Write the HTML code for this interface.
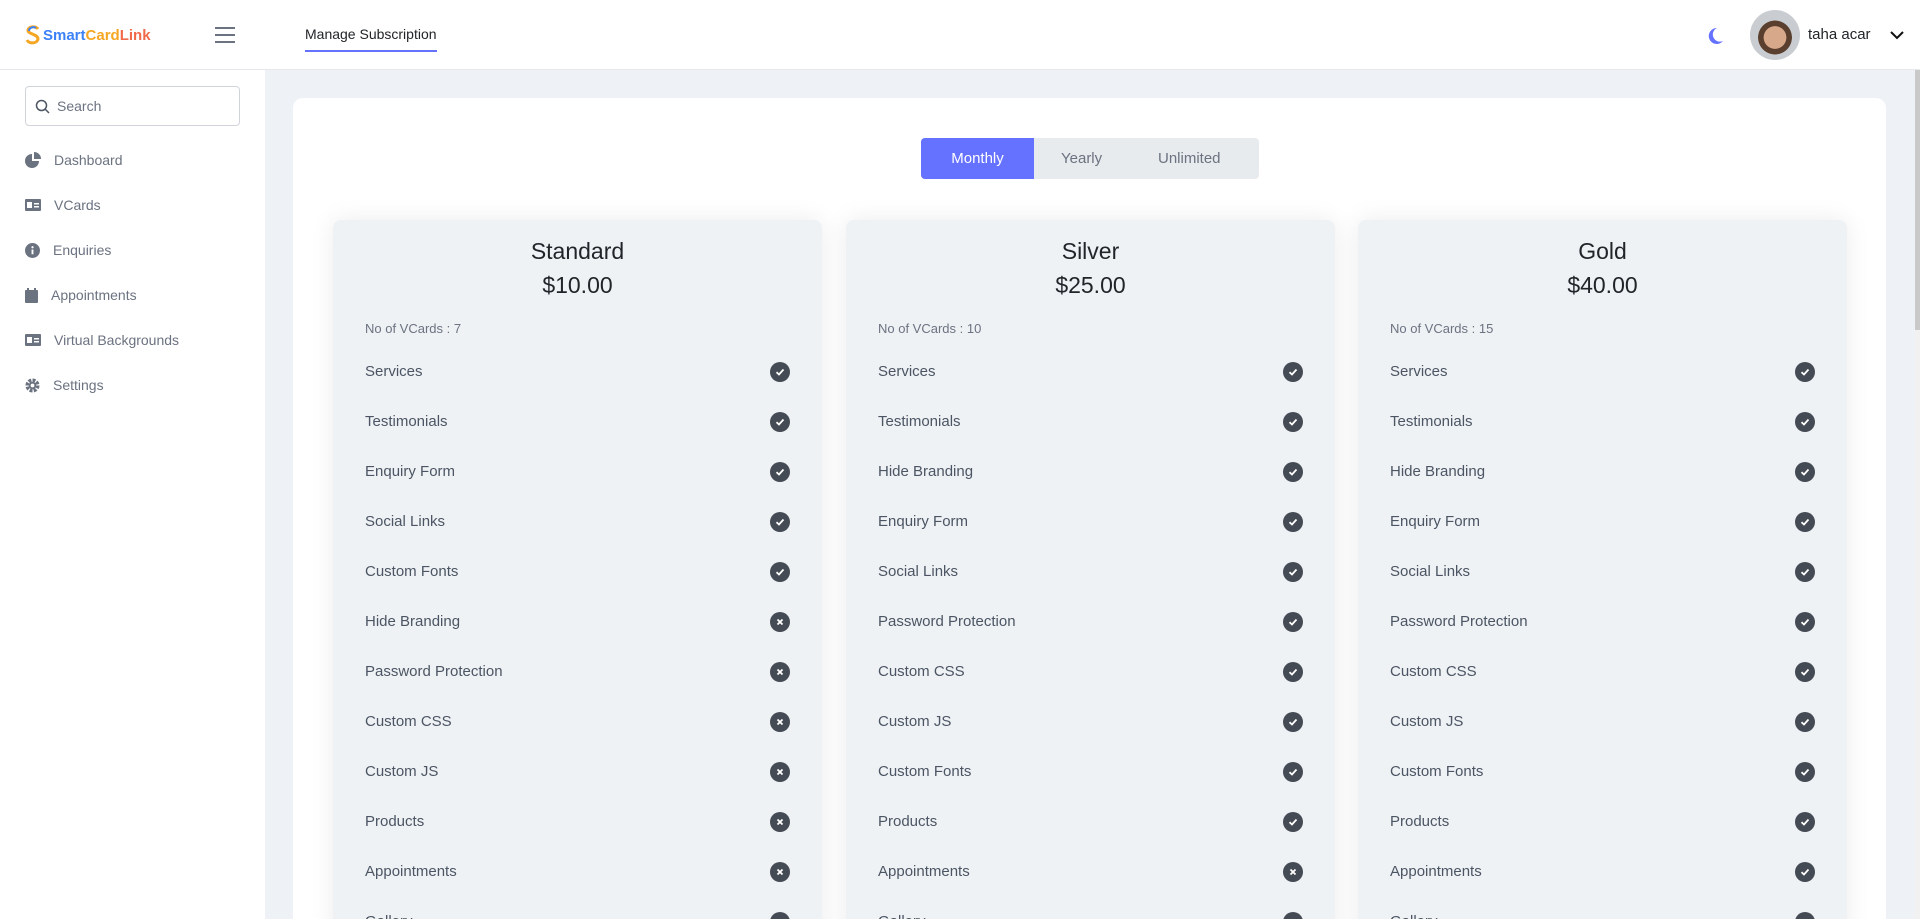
<!DOCTYPE html>
<html><head><meta charset="utf-8"><style>
*{box-sizing:border-box;margin:0;padding:0}
html,body{width:1920px;height:919px;overflow:hidden}
body{background:#eef1f5;font-family:"Liberation Sans",sans-serif}
#root{position:relative;width:1920px;height:919px;overflow:hidden;background:#eef1f5}
.hdr{position:absolute;left:0;top:0;width:1920px;height:70px;background:#fff;border-bottom:1px solid #e6e8ec}
.side{position:absolute;left:0;top:70px;width:265px;height:849px;background:#fff}
.logo{position:absolute;left:25px;top:25px;font-weight:bold;font-size:15px;display:flex;align-items:center}
.ham{position:absolute;left:215px;top:27px;width:20px}
.ham i{display:block;height:2px;background:#6b7280;margin-bottom:5px}
.tab{position:absolute;left:305px;top:26px;font-size:14px;color:#212529}
.tab:after{content:"";position:absolute;left:0;right:0;top:24px;height:2px;background:#6571ff}
.search{position:absolute;left:25px;top:16px;width:215px;height:40px;border:1px solid #d1d5db;border-radius:4px;font-size:14px;color:#6b7280;padding:11px 0 0 31px}
.search svg{position:absolute;left:9px;top:12px}
.menu{position:absolute;left:25px;font-size:14px;color:#6b7280;display:flex;align-items:center}
.menu span{margin-left:13px}
.wrap{position:absolute;left:293px;top:98px;width:1593px;height:900px;background:#fff;border-radius:10px}
.tog{position:absolute;left:921px;top:138px;width:338px;height:41px;background:#e8ebee;border-radius:4px;font-size:15px;color:#6b7280}
.tog div{position:absolute;top:12px}
.mon{left:0;top:0!important;width:113px;height:41px;background:#6571ff;color:#fff;border-radius:4px 0 0 4px;padding-top:12px;text-align:center}
.card{position:absolute;top:220px;width:489px;height:760px;background:#eff2f5;border-radius:8px;box-shadow:0 0 25px rgba(0,0,0,.08)}
.t{position:absolute;left:0;width:100%;text-align:center;font-size:23px;color:#212529}
.nv{position:absolute;left:32px;top:101px;font-size:13px;color:#6b7280}
.row{position:absolute;left:32px;right:32px;height:20px;font-size:15px;color:#4b5563;line-height:20px}
.row b{position:absolute;right:0;top:0;width:20px;height:20px;border-radius:50%;background:#454b54}
.row b svg{position:absolute;left:5px;top:5px}
.sb{position:absolute;right:0;top:70px;width:5px;height:849px;background:#f1f1f1}
.sb i{position:absolute;left:0;top:0;width:5px;height:260px;background:#c9c9c9}
</style></head><body><div id="root">
<div class="hdr">
 <div class="logo"><svg width="16" height="20" viewBox="0 0 16 20"><path d="M13 4C11 1 4 1 3 5C2 9 13 9 13 14C12 19 4 19 2 15" fill="none" stroke="#f5a623" stroke-width="3"/><path d="M11 3C8 1 4 3 4 6" fill="none" stroke="#3b82f6" stroke-width="2"/></svg><span style="color:#3b82f6;margin-left:2px">Smart</span><span style="color:#f5a623">Card</span><span style="color:#f06b4a">Link</span></div>
 <div class="ham"><i></i><i></i><i></i></div>
 <div class="tab">Manage Subscription</div>
 <svg style="position:absolute;left:1707px;top:27px" width="17" height="18" viewBox="0 0 17 18"><path d="M10 1A8 8 0 1 0 16 14A7 7 0 0 1 10 1Z" fill="#6571ff"/></svg>
 <div style="position:absolute;left:1750px;top:10px;width:50px;height:50px;border-radius:50%;background:radial-gradient(circle at 50% 55%,#d8a88a 0 30%,#5a3f2e 31% 45%,#c9ccd0 46%)"></div>
 <div style="position:absolute;left:1808px;top:26px;font-size:15px;color:#212529">taha acar</div>
 <svg style="position:absolute;left:1890px;top:31px" width="14" height="9" viewBox="0 0 14 9"><path d="M1 1L7 7L13 1" fill="none" stroke="#111" stroke-width="2"/></svg>
</div>
<div class="side">
 <div class="search"><svg width="15" height="15" viewBox="0 0 15 15"><circle cx="6.5" cy="6.5" r="5" fill="none" stroke="#4b5563" stroke-width="1.5"/><path d="M10 10L14 14" stroke="#4b5563" stroke-width="1.5"/></svg>Search</div>
 <div class="menu" style="top:82px"><svg width="16" height="16" viewBox="0 0 16 16"><path d="M7 2A7 7 0 1 0 14 9H7Z" fill="#6b7280"/><path d="M9 0A7 7 0 0 1 16 7H9Z" fill="#6b7280"/></svg><span>Dashboard</span></div>
 <div class="menu" style="top:127px"><svg width="16" height="12" viewBox="0 0 16 12"><rect width="16" height="12" rx="1" fill="#6b7280"/><rect x="2" y="3" width="5" height="6" fill="#fff"/><rect x="9" y="4" width="5" height="1.5" fill="#fff"/><rect x="9" y="7" width="5" height="1.5" fill="#fff"/></svg><span>VCards</span></div>
 <div class="menu" style="top:172px"><svg width="15" height="15" viewBox="0 0 16 16"><circle cx="8" cy="8" r="8" fill="#6b7280"/><rect x="7" y="7" width="2" height="5" fill="#fff"/><circle cx="8" cy="4.5" r="1.2" fill="#fff"/></svg><span>Enquiries</span></div>
 <div class="menu" style="top:217px"><svg width="13" height="15" viewBox="0 0 13 15"><rect y="2" width="13" height="13" rx="1" fill="#6b7280"/><rect x="2" y="0" width="2" height="4" fill="#6b7280"/><rect x="9" y="0" width="2" height="4" fill="#6b7280"/></svg><span>Appointments</span></div>
 <div class="menu" style="top:262px"><svg width="16" height="12" viewBox="0 0 16 12"><rect width="16" height="12" rx="1" fill="#6b7280"/><rect x="2" y="3" width="5" height="6" fill="#fff"/><rect x="9" y="4" width="5" height="1.5" fill="#fff"/><rect x="9" y="7" width="5" height="1.5" fill="#fff"/></svg><span>Virtual Backgrounds</span></div>
 <div class="menu" style="top:307px"><svg width="15" height="15" viewBox="0 0 16 16"><circle cx="8" cy="8" r="5.5" fill="none" stroke="#6b7280" stroke-width="4" stroke-dasharray="3 1.3"/><circle cx="8" cy="8" r="4" fill="#6b7280"/><circle cx="8" cy="8" r="2" fill="#fff"/></svg><span>Settings</span></div>
</div>
<div class="wrap"></div>
<div class="tog"><div class="mon">Monthly</div><div style="left:140px">Yearly</div><div style="left:237px">Unlimited</div></div>
<div id="cards"></div>
<div class="sb"><i></i></div>
</div>
<script>
const C='<svg width="10" height="10" viewBox="0 0 10 10"><path d="M1.5 5.2L4 7.5L8.5 2.5" fill="none" stroke="#fff" stroke-width="1.8"/></svg>';
const X='<svg width="10" height="10" viewBox="0 0 10 10"><path d="M2.5 2.5L7.5 7.5M7.5 2.5L2.5 7.5" stroke="#fff" stroke-width="1.8"/></svg>';
const cards=[
[333,'Standard','$10.00',7,[['Services',1],['Testimonials',1],['Enquiry Form',1],['Social Links',1],['Custom Fonts',1],['Hide Branding',0],['Password Protection',0],['Custom CSS',0],['Custom JS',0],['Products',0],['Appointments',0],['Gallery',1]]],
[846,'Silver','$25.00',10,[['Services',1],['Testimonials',1],['Hide Branding',1],['Enquiry Form',1],['Social Links',1],['Password Protection',1],['Custom CSS',1],['Custom JS',1],['Custom Fonts',1],['Products',1],['Appointments',0],['Gallery',1]]],
[1358,'Gold','$40.00',15,[['Services',1],['Testimonials',1],['Hide Branding',1],['Enquiry Form',1],['Social Links',1],['Password Protection',1],['Custom CSS',1],['Custom JS',1],['Custom Fonts',1],['Products',1],['Appointments',1],['Gallery',1]]]];
let h='';
for(const c of cards){
 h+=`<div class="card" style="left:${c[0]}px"><div class="t" style="top:18px">${c[1]}</div><div class="t" style="top:52px">${c[2]}</div><div class="nv">No of VCards : ${c[3]}</div>`;
 c[4].forEach((r,i)=>{h+=`<div class="row" style="top:${142+i*50}px">${r[0]}<b>${r[1]?C:X}</b></div>`});
 h+='</div>';
}
document.getElementById('cards').innerHTML=h;
</script>
</body></html>
